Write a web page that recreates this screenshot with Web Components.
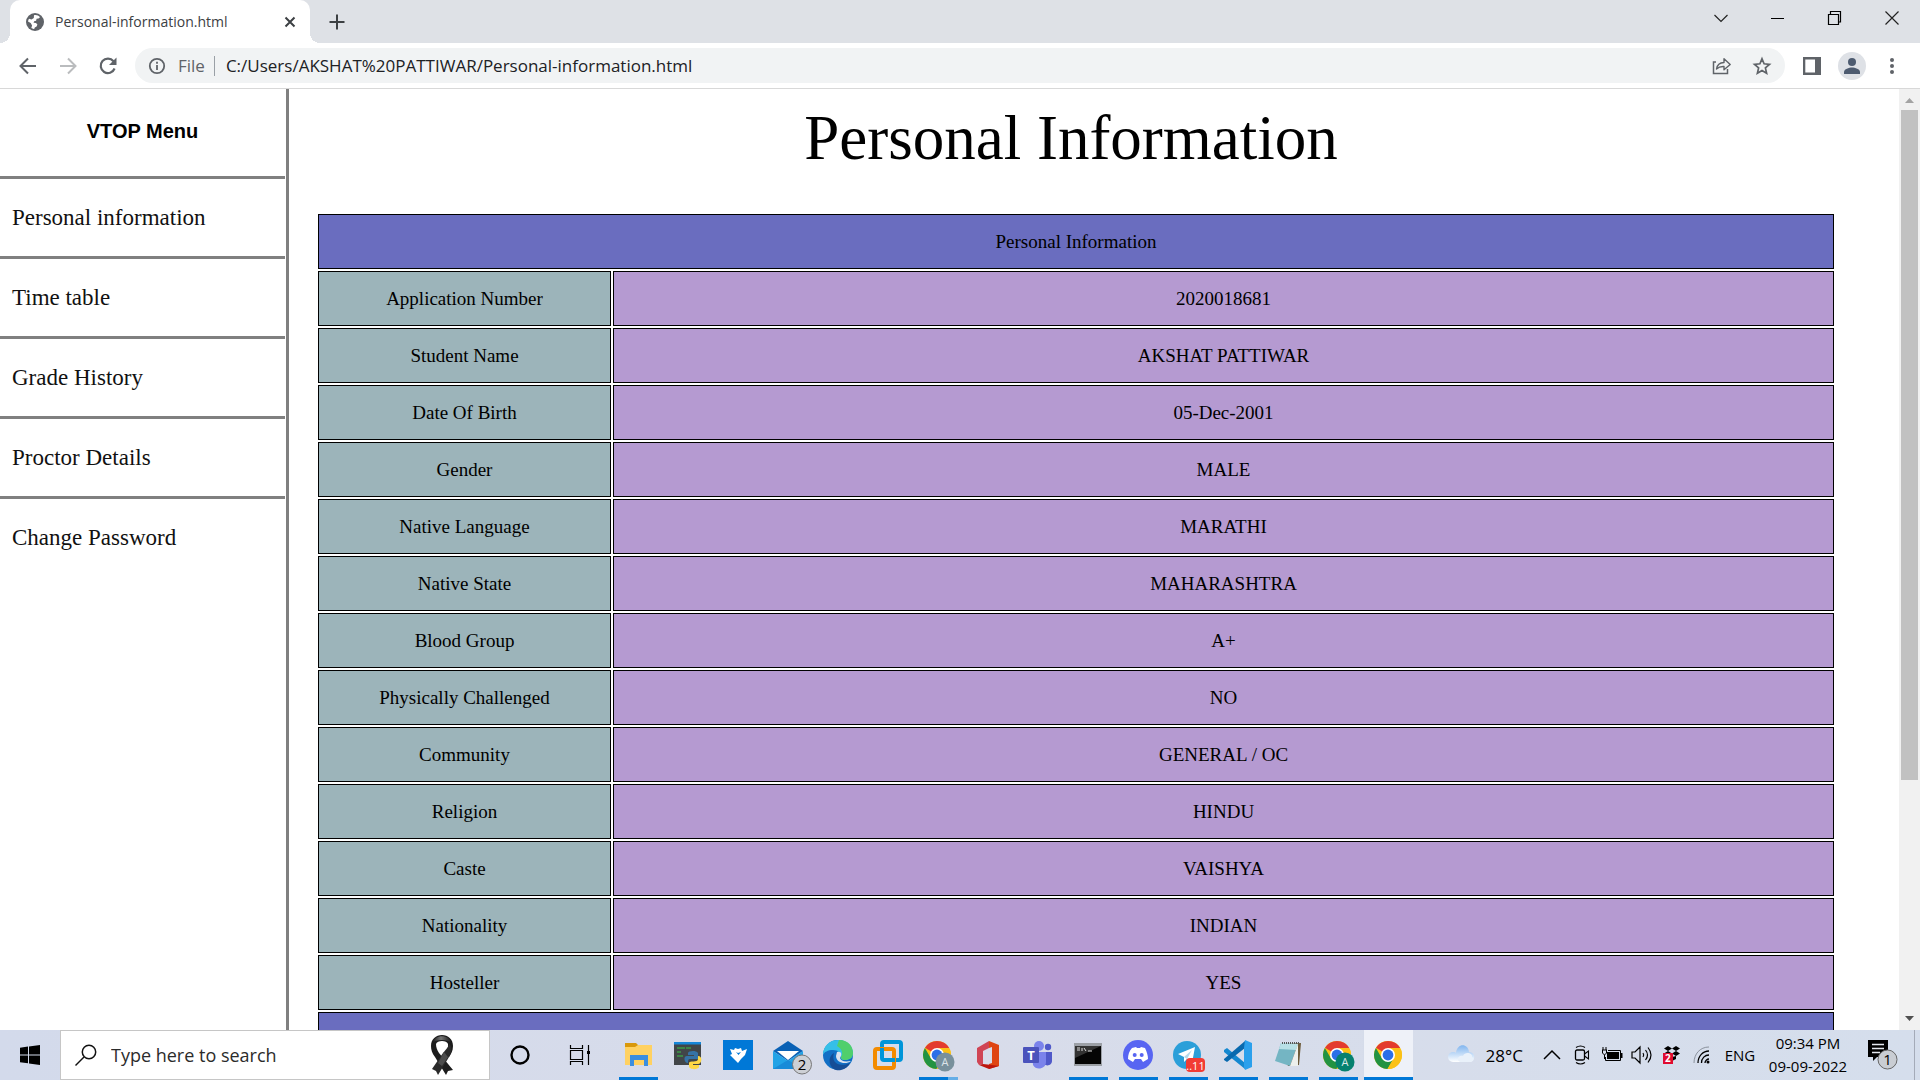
<!DOCTYPE html>
<html lang="en">
<head>
<meta charset="utf-8">
<title>Personal-information.html</title>
<style>
  html, body { height: 100%; margin: 0; }
  body { display: flex; flex-direction: column; overflow: hidden; background: #fff; color: #000; }
</style>
</head>
<body>
<tab-strip><browser-tab>Personal-information.html</browser-tab></tab-strip>
<nav-toolbar></nav-toolbar>
<page-view>
  <side-menu slot="menu"></side-menu>
  <info-page></info-page>
</page-view>
<task-bar></task-bar>

<script>
const define = (name, html, setup) => customElements.define(name, class extends HTMLElement {
  constructor() {
    super();
    const t = document.createElement('template');
    t.innerHTML = html;
    this.attachShadow({ mode: 'open' }).append(t.content.cloneNode(true));
    if (setup) setup(this, this.shadowRoot);
  }
});
const base = `:host,*{box-sizing:border-box} svg{display:block;flex:none;overflow:visible}
 button{border:0;padding:0;margin:0;background:none;color:inherit;font:inherit;display:flex;align-items:center;justify-content:center;flex:none}
 input{border:0;padding:0;margin:0;background:none;outline:0;min-width:0;flex:1;font:inherit;color:inherit}
 input::placeholder{color:inherit;opacity:1}`;
const ui = `'Open Sans','Noto Sans',sans-serif`;

/* ---------- browser chrome ---------- */
define('browser-tab', `<style>${base}
:host{display:flex;align-items:center;width:300px;height:43px;background:#fff;border-radius:10px 10px 0 0;padding:0 9px 0 16px;gap:11px;position:relative;font:14px/20px ${ui};color:#3c4043}
:host::before,:host::after{content:"";position:absolute;bottom:0;width:10px;height:10px}
:host::before{left:-10px;background:radial-gradient(circle at 0 0,transparent 10px,#fff 10px)}
:host::after{right:-10px;background:radial-gradient(circle at 100% 0,transparent 10px,#fff 10px)}
span{flex:1;white-space:nowrap}button{width:22px;height:22px}</style>
<svg width="18" height="18" viewBox="0 0 18 18"><circle cx="9" cy="9" r="9" fill="#5f6368"/><path d="M8 2.200c2-.6 4.600 0 6 2l-1.500 1.300-1.900.2-.5 2-2 .6-.5 1.400 2.400.2 1.400 1.700-.8 2-1.800.8-.6 1.500c-1 .2-2-.2-2.900-.8l.8-2.500L4.700 10 2 8.500c.1-1 .5-2 1-2.800l2.500.8 2.300-1.400z" fill="#fff"/></svg>
<span><slot></slot></span>
<button aria-label="Close tab"><svg width="12" height="12" viewBox="0 0 12 12"><path d="M1.500 1.500l9 9m0-9l-9 9" stroke="#3c4043" stroke-width="2"/></svg></button>`);

define('tab-strip', `<style>${base}
:host{display:flex;height:43px;flex:none;background:#dee1e6;padding-left:10px;align-items:center}
.new{width:40px;height:40px;margin-left:7px}.win{display:flex;margin-left:auto;height:36px;align-self:flex-start}.win button{width:57px}</style>
<slot></slot>
<button class="new" aria-label="New tab"><svg width="16" height="16" viewBox="0 0 16 16"><path d="M8 .5v15M.5 8h15" stroke="#3c4043" stroke-width="2"/></svg></button>
<div class="win">
<button aria-label="Search tabs"><svg width="14" height="14" viewBox="0 0 14 14"><path d="M.5 4L7 10.500 13.500 4" fill="none" stroke="#222" stroke-width="1.200"/></svg></button>
<button aria-label="Minimize"><svg width="14" height="14" viewBox="0 0 14 14"><path d="M0 7.500h13" stroke="#000"/></svg></button>
<button aria-label="Restore"><svg width="14" height="14" viewBox="0 0 14 14"><path d="M.5 3.500h10v10H.5zM2.500 3V.5h10v10.500H11" fill="none" stroke="#000" stroke-width="1.200"/></svg></button>
<button aria-label="Close"><svg width="14" height="14" viewBox="0 0 14 14"><path d="M.5 .5l13 13m0-13l-13 13" stroke="#222" stroke-width="1.200"/></svg></button>
</div>`);

define('nav-toolbar', `<style>${base}
:host{display:flex;height:46px;flex:none;align-items:center;background:#fff;border-bottom:1px solid #d8d8d8;padding:0 8px;font:17px/24px ${ui}}
button{width:40px;height:35px}
.box{flex:1;display:flex;align-items:center;height:35px;margin:0 7px;padding:0 3px 0 12px;border-radius:18px;background:#f1f3f4;color:#202124}
label{color:#5f6368;margin-left:11px}.bar{width:1px;height:20px;background:#9aa0a6;margin:0 11px 0 9px}</style>
<button aria-label="Back"><svg width="18" height="18" viewBox="0 0 18 18"><path d="M17 9H2M9 1.500L1.500 9 9 16.500" fill="none" stroke="#5f6368" stroke-width="2"/></svg></button>
<button aria-label="Forward"><svg width="18" height="18" viewBox="0 0 18 18"><path d="M1 9h15M9 1.500L16.500 9 9 16.500" fill="none" stroke="#babcbe" stroke-width="2"/></svg></button>
<button aria-label="Reload"><svg width="18" height="18" viewBox="0 0 18 18"><path d="M15.600 11.500A7.200 7.200 0 1 1 14.500 4.300" fill="none" stroke="#5f6368" stroke-width="2.200"/><path d="M17.500.5v7.500H10z" fill="#5f6368"/></svg></button>
<div class="box">
<svg width="20" height="20" viewBox="0 0 20 20"><circle cx="10" cy="10" r="7.200" fill="none" stroke="#5f6368" stroke-width="1.800"/><path d="M10 9v5M10 5.700v2" stroke="#5f6368" stroke-width="1.800"/></svg>
<label for="url">File</label><span class="bar"></span>
<input id="url" type="text" value="C:/Users/AKSHAT%20PATTIWAR/Personal-information.html">
<button aria-label="Share"><svg width="20" height="20" viewBox="0 0 20 20"><path d="M4 6H1.500v11.500h14V13" fill="none" stroke="#5f6368" stroke-width="1.500"/><path d="M4.500 13c.6-4 3-6.300 7.500-6.500V2.800l6.200 5.700-6.200 5.300V10.500c-3.500-.2-5.500.5-7.500 2.500z" fill="none" stroke="#5f6368" stroke-width="1.400" stroke-linejoin="round"/></svg></button>
<button aria-label="Bookmark"><svg width="20" height="20" viewBox="0 0 20 20"><path d="M10 2.800l2.100 5 5.400.5-4.100 3.600 1.200 5.300L10 14.400l-4.600 2.800 1.200-5.300-4.100-3.600 5.400-.5z" fill="none" stroke="#5f6368" stroke-width="1.700"/></svg></button>
</div>
<button aria-label="Side panel"><svg width="18" height="18" viewBox="0 0 18 18"><path fill="#5f6368" fill-rule="evenodd" d="M0 0h18v18H0zM2.300 2.500v13H12v-13z"/></svg></button>
<button aria-label="Profile"><svg width="28" height="28" viewBox="0 0 28 28"><circle cx="14" cy="14" r="14" fill="#dee1e6"/><circle cx="14" cy="10" r="4" fill="#4d5b70"/><path d="M6 22v-2c0-3 5-4.500 8-4.500s8 1.500 8 4.500v2z" fill="#4d5b70"/></svg></button>
<button aria-label="Menu"><svg width="6" height="18" viewBox="0 0 6 18"><g fill="#5f6368"><circle cx="3" cy="3" r="2"/><circle cx="3" cy="9" r="2"/><circle cx="3" cy="15" r="2"/></g></svg></button>`);

/* ---------- page ---------- */
define('page-view', `<style>${base}
:host{display:flex;flex:1;min-height:0;overflow:hidden;background:#fff}
.scroll{width:21px;flex:none;background:#f1f1f1;display:flex;flex-direction:column;align-items:center;padding:8px 0}
.track{flex:1;width:17px;margin:6px 0}.thumb{height:74.5%;background:#c1c1c1}</style>
<slot name="menu"></slot><slot></slot>
<div class="scroll"><svg width="9" height="7" viewBox="0 0 9 7"><path d="M0 6l4.500-5L9 6z" fill="#a3a3a3"/></svg><div class="track"><div class="thumb"></div></div><svg width="9" height="7" viewBox="0 0 9 7"><path d="M0 1l4.500 5L9 1z" fill="#505050"/></svg></div>`);

define('side-menu', `<style>${base}
:host{display:block;width:289px;flex:none;border-right:3px solid #808080;padding-right:1px}
h2{margin:0;height:90px;padding-bottom:3px;display:flex;align-items:center;justify-content:center;font:bold 20px/24px 'Liberation Sans',Arial,sans-serif;border-bottom:3px solid #808080}
a{display:flex;align-items:center;height:80px;padding-left:12px;color:#111;text-decoration:none;font:23px/26px 'Liberation Serif','Times New Roman',serif;border-bottom:3px solid #808080}
a:last-child{border-bottom-color:transparent}</style>
<h2>VTOP Menu</h2><nav><a href="#info">Personal information</a><a href="#time">Time table</a><a href="#grade">Grade History</a><a href="#proctor">Proctor Details</a><a href="#password">Change Password</a></nav>`);

const rows = [['Application Number','2020018681'],['Student Name','AKSHAT PATTIWAR'],['Date Of Birth','05-Dec-2001'],['Gender','MALE'],['Native Language','MARATHI'],['Native State','MAHARASHTRA'],['Blood Group','A+'],['Physically Challenged','NO'],['Community','GENERAL / OC'],['Religion','HINDU'],['Caste','VAISHYA'],['Nationality','INDIAN'],['Hosteller','YES']];
define('info-page', `<style>${base}
:host{display:block;flex:1;min-width:0;overflow:hidden;padding-right:46px;font:19px/23px 'Liberation Serif','Times New Roman',serif}
h1{margin:13px 0 38px;font-size:63px;line-height:72px;font-weight:400;text-align:center}
.wrap{padding:0 17px 0 27px}
table{width:100%;border-spacing:2px;table-layout:fixed;text-align:center}
col:first-child{width:293px}
th,td{height:55px;padding:0;border:1px solid #000;font-weight:400;background:#b59ad1}
tbody th{background:#9cb4ba}th[colspan]{background:#6a6dbf}</style>
<h1>Personal Information</h1>
<div class="wrap"><table><colgroup><col><col></colgroup><thead><tr><th colspan="2">Personal Information</th></tr></thead><tbody>${rows.map(r => `<tr><th scope="row">${r[0]}</th><td>${r[1]}</td></tr>`).join('')}</tbody><tfoot><tr><th colspan="2"></th></tr></tfoot></table></div>`);

/* ---------- taskbar ---------- */
define('task-button', `<style>${base}
:host{display:block;width:50px;height:50px;flex:none}
:host([wide]){width:60px}
button{position:relative;width:100%;height:100%}
:host([open]) button::after{content:"";position:absolute;left:6px;width:39px;bottom:0;height:3px;background:#0078d7}
:host([stacked]) button::after{background:linear-gradient(90deg,#0078d7 29px,#66aee7 29px)}
:host([active]) button{background:#eef1f8;border-left:1px solid #d5dcea}
:host([active]) button::after{left:0;width:49px}</style><button><slot></slot></button>`,
(el, root) => root.querySelector('button').setAttribute('aria-label', el.getAttribute('name') || ''));

const chrome = `<circle cx="15" cy="15" r="14" fill="#fbc116"/><path d="M15 15L3 7.800A14 14 0 0 1 27.200 8H15z" fill="#e33b2e"/><path d="M15 15l-6 3.500L2.900 7.900A14 14 0 0 0 14.500 29l6.500-11z" fill="#229342"/><path d="M15 8.500h12.400A14 14 0 0 1 14.500 29l6-10.500z" fill="#fbc116"/><circle cx="15" cy="15" r="7" fill="#fff"/><circle cx="15" cy="15" r="5.400" fill="#2a6fe8"/>`;
const svg = (body, w = 34) => `<svg width="${w}" height="34" viewBox="0 0 ${w} 34" font-family="Open Sans">${body}</svg>`;
const task = (name, attrs, body) => `<task-button name="${name}" ${attrs}>${svg(body)}</task-button>`;

define('task-bar', `<style>${base}
:host{display:flex;height:50px;flex:none;align-items:center;background:linear-gradient(90deg,#d3daeb,#d8dcea 50%,#d5deec);font:17px/23px ${ui};overflow:hidden}
.start{width:60px;height:50px}
.search{display:flex;align-items:center;width:430px;height:50px;background:#fff;border:1px solid #c6c6c6;padding:0 33px 0 14px;gap:14px;color:#2b2b2b;font-size:18px}
.apps{display:flex;margin-left:3px}.tray{display:flex;align-items:center;margin-left:auto;height:50px}
.tray button{width:30px;height:50px}.tray .weather{width:auto;gap:11px;margin-right:14px}
.tray .lang{width:32px;font-size:15px;margin:0 4px 0 7px}
.tray .clock{width:96px;margin-right:4px;flex-direction:column;font-size:15px;line-height:23px}
.tray .note{width:39px;margin:0 12px 0 3px}.edge{width:6px;height:50px;border-left:1px solid #a4abb8}</style>
<button class="start" aria-label="Start"><svg width="20" height="20" viewBox="0 0 20 20"><path d="M0 2.700L8 1.600v7.800H0zM9 1.400L20 0v9.400H9zM0 10.400h8v7.900l-8-1.100zM9 10.400h11V20L9 18.500z"/></svg></button>
<div class="search"><svg width="22" height="22" viewBox="0 0 22 22"><circle cx="14" cy="8" r="6.700" fill="none" stroke="#111" stroke-width="1.500"/><path d="M9 13l-8.500 8.500" stroke="#111" stroke-width="1.500"/></svg>
<input type="search" placeholder="Type here to search" aria-label="Type here to search">
<svg width="28" height="42" viewBox="0 0 28 42"><defs><linearGradient id="rb"><stop stop-color="#111"/><stop offset=".45" stop-color="#777"/><stop offset="1" stop-color="#111"/></linearGradient></defs><path d="M3 12C3 5 8 1 14 1s11 4 11 11c0 5-2 8-4 11l-3-4c2-3 2-5 2-9-1-4-11-4-12 0 0 3 1 6 3 9l14 17-5 1-2 4L7 23C4 19 3 16 3 12z" fill="#1c1c1c"/><path d="M21 10c3 1 3 8 0 13L10 41l-2-4-4-2 11-16c3-4 5-5 6-9z" fill="#2a2a2a"/><path d="M4 9C7 0 21 0 24 9c-4-4-16-4-20 0z" fill="url(#rb)"/><path d="M16 18l4 5-6 9-4-3z" fill="#4c4c4c"/></svg></div>
<task-button wide name="Cortana"><svg width="20" height="20" viewBox="0 0 20 20"><circle cx="10" cy="10" r="8.500" fill="none" stroke="#000" stroke-width="2.400"/></svg></task-button>
<task-button wide name="Task view"><svg width="22" height="20" viewBox="0 0 22 20"><path d="M1.500 0v3.500h12V0M1.500 20v-3.500h12V20M1.500 5.500h12v9h-12zM19.500 0v20" fill="none" stroke="#000" stroke-width="1.200"/><path d="M18 6h3v3h-3z"/></svg></task-button>
<div class="apps">
${task('File Explorer','open',`<path d="M4 5h11l2 2v4H4z" fill="#d9980b"/><path d="M4 9h10l3-2h14v20H4z" fill="#ffd161"/><path d="M9 28V17h18v11h-4v-6H13v6z" fill="#3b8ee0"/>`)}
${task('Python','',`<path d="M3 4h27v23H3z" fill="#414548"/><path d="M3 4h27v2.500H3z" fill="#1586d8"/><path d="M6 10h8M6 14h4M6 18h6M15 10h5" stroke="#3d9b46" stroke-width="1.500"/><path d="M17 15c0-2 8-3 10 0v6h-8c-2 0-2 2-2 4-4 0-5-7-1-7h7v-1h-6z" fill="#3572a5"/><path d="M27 18c5 0 4 8 0 8h-5v1h6v2c-1 3-10 3-10-1v-3c0-3 9 0 9-4z" fill="#ffd845"/>`)}
${task('Birds','',`<path d="M2 2h30v30H2z" fill="#0078d7"/><path d="M9 11l4 1 1-2 3 1 3-1 1 3 5-2-2 6-4 4-3 4-4-4-4-4 2-1z" fill="#fff"/><path d="M15 14l2 1 3-1-2.500 3z" fill="#0078d7"/>`)}
${task('Mail','',`<path d="M2 13L17 3l15 10-15 10z" fill="#0a61b5"/><path d="M6 13h22l-11 9z" fill="#fff"/><path d="M2 13l15 10 15-10v18H2z" fill="#22a3e6"/><path d="M2 31l15-9 15 9z" fill="#188bd8"/><circle cx="31" cy="26.500" r="9.500" fill="#cdd0d5" stroke="#777"/><text x="31" y="32" font-size="15" text-anchor="middle">2</text>`)}
${task('Edge','',`<circle cx="17" cy="17" r="15" fill="#126fc5"/><path d="M2 17C2 8 9 2 17 2c9 0 15 6 15 13 0 5-4 7-8 7-3 0-5-1-4-4 0-3-3-6-8-6-5 0-9 2-10 5z" fill="#35bfe8"/><path d="M18 2c10 0 14 7 14 13 0 5-4 7-8 7-3 0-4-1-4-3 3-4 0-9-4-11z" fill="#50cf6c"/><path d="M13 15c-3 9 4 15 16 10-3 6-9 8-14 7-7-2-9-13-2-17z" fill="#154d96"/><path d="M16 14c5-1 5 3 3 6 1 3 4 4 11 3-5 4-15 2-15-5z" fill="#dce2ef"/>`)}
${task('VMware','',`<rect x="11" y="4" width="19" height="18" rx="2" fill="none" stroke="#0095d9" stroke-width="4"/><rect x="4" y="11" width="19" height="19" rx="2" fill="none" stroke="#f38b00" stroke-width="4"/><path d="M11 13v-3M15 22h9" stroke="#0095d9" stroke-width="4"/>`)}
${task('Chrome','open stacked',`<g transform="translate(1 2)">${chrome}</g><circle cx="24" cy="24" r="9.500" fill="#78909c"/><text x="24" y="28" font-size="11" text-anchor="middle" fill="#dce4e8">A</text>`)}
${task('Office','',`<path d="M6 10L18 3v7l-6 3v13l-4 1-2-3z" fill="#d04555"/><path d="M18 3l10 4v21l-10 3v-5l3-1V9l-3 1z" fill="#df4512"/><path d="M8 27l4-1 9 1 7 1-10 3z" fill="#bd160d"/>`)}
${task('Teams','',`<circle cx="18" cy="8" r="5" fill="#7b83eb"/><circle cx="27" cy="9" r="3.200" fill="#5059c9"/><path d="M22 14h9v9c0 4-5 6-8 3z" fill="#5059c9"/><path d="M11 14h14v10c0 7-10 9-13 3z" fill="#7b83eb"/><rect x="2" y="9" width="16" height="16" rx="1" fill="#4b53bc"/><text x="10" y="22" font-size="13" font-weight="700" text-anchor="middle" fill="#fff">T</text>`)}
${task('Command Prompt','open',`<path d="M3 5h28v23H3z" fill="#9ca0a6"/><path d="M4 8h26v18H4z" fill="#050505"/><path d="M4 8h26L4 20z" fill="#333"/><path d="M6 10h3M6 12h3M11 10v3M13 10l2 3M17 13h4" stroke="#ddd" fill="none"/>`)}
${task('Discord','open',`<circle cx="17" cy="17" r="15" fill="#5865f2"/><path d="M11 10l4-1 1 1h3l1-1 4 1c2 4 3 8 3 11l-5 3-2-3h-6l-2 3-5-3c0-4 1-8 4-11z" fill="#fff"/><circle cx="13.700" cy="17" r="2" fill="#5865f2"/><circle cx="20.700" cy="17" r="2" fill="#5865f2"/>`)}
${task('Telegram','open',`<circle cx="16" cy="17" r="14" fill="#2b9fd9"/><path d="M7 16l17-7-3 16-5-4-3 3v-5z" fill="#fff"/><path d="M13 19l8-7-5 9z" fill="#b4d9ec"/><rect x="15" y="20" width="19" height="14" rx="4" fill="#f23c34"/><text x="24.500" y="31.500" font-size="11" text-anchor="middle" fill="#fff">..11</text>`)}
${task('Visual Studio Code','open',`<path d="M3 12l3-2 18 15v6L3 14z" fill="#1488d0"/><path d="M3 21L24 3v7L6 24l-3-2z" fill="#0869ae"/><path d="M24 2l7 3v24l-7 3-1-3V10z" fill="#2ba0ec"/>`)}
${task('Notepad','open',`<path d="M10 6l20-1-2 22-11 1z" fill="#6d5b3a"/><path d="M10 5l17 1-8 22-15-5z" fill="#74b5c3"/><path d="M10 5l17 1-2 6-17-1z" fill="#b8e0e6"/><path d="M19 28l8-22v22z" fill="#edf0ed"/><path d="M11 5h17" stroke="#555" stroke-width="2" stroke-dasharray="1 1"/>`)}
${task('Chrome, second profile','open',`<g transform="translate(1 2)">${chrome}</g><circle cx="24" cy="24" r="9.500" fill="#06816f"/><text x="24" y="28" font-size="11" text-anchor="middle" fill="#dce9e8">A</text>`)}
${task('Chrome, active','open active',`<g transform="translate(1 2)">${chrome}</g>`)}
</div>
<div class="tray">
<button class="weather"><svg width="28" height="24" viewBox="0 0 28 24"><defs><linearGradient id="cl" x2="0" y2="1"><stop stop-color="#82b6ef"/><stop offset="1" stop-color="#fff"/></linearGradient></defs><path d="M6 19a5 5 0 0 1 0-10c2 0 2 0 3 1C10 0 21 0 22 9c7 0 7 10 0 10z" fill="url(#cl)"/><path d="M13 19c-4-2-2-7 3-6 2-5 10-3 9 1 3 2 1 5-2 5z" fill="#e9f1fa"/></svg><span>28°C</span></button>
<button aria-label="Show hidden icons"><svg width="18" height="10" viewBox="0 0 18 10"><path d="M1 9l8-8 8 8" fill="none" stroke="#000" stroke-width="1.500"/></svg></button>
<button aria-label="Meet now"><svg width="16" height="20" viewBox="0 0 16 20"><rect x="1.500" y="5" width="9" height="10" rx="1.500" fill="none" stroke="#000" stroke-width="1.300"/><path d="M10.500 9l4-3v8l-4-3M2 2.500c3-2 6-2 9 0M2 17.500c3 2 6 2 9 0" fill="none" stroke="#000" stroke-width="1.100"/></svg></button>
<button aria-label="Battery"><svg width="22" height="16" viewBox="0 0 22 16"><path d="M1 3h5M2 0v3M5 0v3M1.500 3v3l2 2 2-2V3M3.500 8v4" fill="none" stroke="#000"/><path d="M7 3.500h12.500v10H4.500V10" fill="none" stroke="#000"/><path d="M6 5h12v7H6zM20 6h1.500v5H20z"/></svg></button>
<button aria-label="Volume"><svg width="22" height="18" viewBox="0 0 22 18"><path d="M1 6h3l5-5v16l-5-5H1zM12 7q1.500 2 0 4M14.500 4q4 5 0 10M17 1.500q6 7.500 0 15" fill="none" stroke="#000" stroke-width="1.200"/></svg></button>
<button aria-label="Dropbox"><svg width="20" height="20" viewBox="0 0 20 20"><path d="M6 1l4 2.500L6 6 2 3.500zM14 1l4 2.500L14 6l-4-2.500zM6 6l4 2.500L6 11 2 8.500zM14 6l4 2.500-4 2.500-4-2.500zM10 12l4-1v3l-4 2z"/><path d="M1 8h10v11H1z" fill="#e00b30"/><text x="3" y="17" font-family="Open Sans" font-size="10" font-weight="700" fill="#fff">2</text></svg></button>
<button aria-label="Wi-Fi"><svg width="18" height="18" viewBox="0 0 18 18"><path d="M1 17C1 8 7 1 16 1" fill="none" stroke="#8b929d"/><path d="M5 17C5 10 10 5 16 5M8.500 17c0-5 3.500-8 7.500-8M12 17c0-2 2-4 4-4" fill="none" stroke="#000" stroke-width="1.300"/><circle cx="15" cy="16" r="1.500"/></svg></button>
<button class="lang">ENG</button>
<button class="clock"><span>09:34 PM</span><span>09-09-2022</span></button>
<button class="note" aria-label="Notifications"><svg width="30" height="30" viewBox="0 0 30 30"><path d="M0 0h20v17H9l-4 4v-4H0z"/><path d="M4 4.500h12M4 8.500h12M4 12.500h8" stroke="#e4e8ef" stroke-width="1.400"/><circle cx="19.500" cy="19.500" r="9.500" fill="#c9cdd3" stroke="#666"/><text x="19.500" y="25" font-family="Open Sans" font-size="15" text-anchor="middle">1</text></svg></button>
<div class="edge"></div></div>`);
</script>
</body>
</html>
